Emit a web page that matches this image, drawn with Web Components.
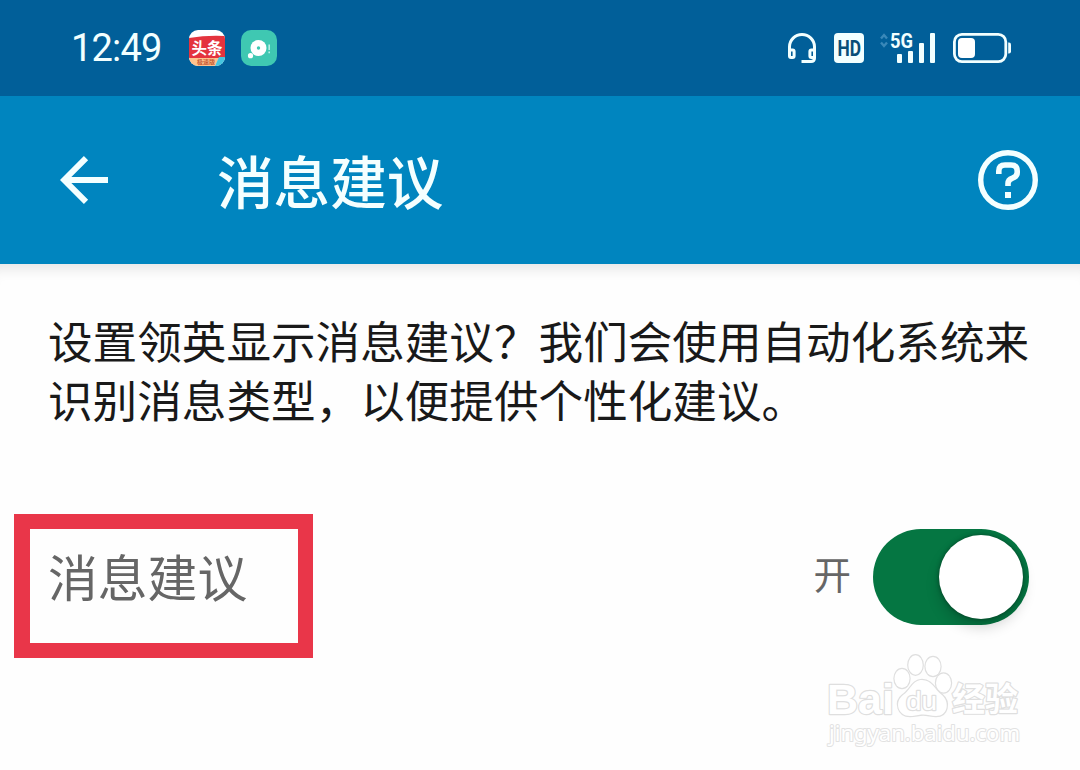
<!DOCTYPE html>
<html lang="zh-CN">
<head>
<meta charset="utf-8">
<title>消息建议</title>
<style>
  body {
    margin: 0;
    width: 1080px;
    height: 770px;
    overflow: hidden;
    background: #fefefe;
    font-family: "Noto Sans CJK SC", sans-serif;
  }
</style>
</head>
<body>
<settings-page>
  <status-bar slot="status" time="12:49"></status-bar>
  <title-bar slot="header">消息建议</title-bar>
  <p slot="intro">设置领英显示消息建议？我们会使用自动化系统来识别消息类型，以便提供个性化建议。</p>
  <setting-row>
    <marked-label>消息建议</marked-label>
    <toggle-switch slot="control">开</toggle-switch>
  </setting-row>
  <site-watermark slot="watermark"></site-watermark>
</settings-page>

<script>
class SettingsPage extends HTMLElement {
  constructor() {
    super();
    this.attachShadow({ mode: "open" });
    this.shadowRoot.innerHTML = `
      <style>
        :host { display: flex; flex-direction: column; position: relative; height: 770px; }
        main { padding: 46px 51px 0 48px; box-shadow: inset 0 16px 13px -11px rgba(0,0,0,.1); }
        ::slotted(p) { margin: 0 0 95px; width: 990px; font-size: 44.6px; line-height: 59.4px; font-weight: 400; color: #191919; }
      </style>
      <slot name="status"></slot>
      <slot name="header"></slot>
      <main>
        <slot name="intro"></slot>
        <slot></slot>
      </main>
      <slot name="watermark"></slot>
    `;
  }
}

class StatusBar extends HTMLElement {
  constructor() {
    super();
    this.attachShadow({ mode: "open" });
  }

  connectedCallback() {
    this.shadowRoot.innerHTML = `
      <style>
        :host { display: flex; align-items: center; box-sizing: border-box; height: 96px; padding: 0 69px 0 71px; background: #015f99; color: #f2ffff; }
        .time { width: 118px; font: 38px/44px Roboto, sans-serif; letter-spacing: -.8px; }
        .apps { display: flex; gap: 16px; flex: 1; }
        .icons { display: flex; align-items: center; }
        svg { display: block; overflow: visible; }
        .hd { margin: 0 15px 0 18px; }
        .battery { margin-left: 17px; }
      </style>
      <span class="time">${this.getAttribute("time")}</span>
      <div class="apps">
        <svg width="36" height="36" viewBox="0 0 36 36">
          <defs><clipPath id="app"><rect width="36" height="36" rx="9"/></clipPath></defs>
          <g clip-path="url(#app)">
            <rect width="36" height="36" fill="#fff"/>
            <path d="M0 8Q18 5 36 6V28H0Z" fill="#e4333e"/>
            <path d="M0 28H30L26 36H0Z" fill="#ffc38d"/>
            <path d="M30 27H36V36H26Z" fill="#45c5df"/>
            <text x="18" y="24" text-anchor="middle" font-family="Noto Sans CJK SC, sans-serif" font-size="15.5" font-weight="700" fill="#fff">头条</text>
            <text x="17" y="34.2" text-anchor="middle" font-family="Noto Sans CJK SC, sans-serif" font-size="6" font-weight="700" fill="#c65b36">极速版</text>
          </g>
        </svg>
        <svg width="36" height="36" viewBox="0 0 36 36">
          <rect width="36" height="36" rx="10" fill="#3fc8b2"/>
          <circle cx="17.5" cy="18" r="8" fill="#fff"/>
          <circle cx="17.5" cy="18" r="1.7" fill="#3fc8b2"/>
          <circle cx="9.5" cy="25.7" r="2.6" fill="#fff"/>
          <path d="M28.2 14.5V20M28.2 21.6V23.2" stroke="#b9eee6" stroke-width="1.6"/>
        </svg>
      </div>
      <div class="icons">
        <svg width="28" height="30" viewBox="0 0 28 30" fill="none" stroke="#f2ffff" stroke-width="3">
          <path d="M1.5 19V13.8a12.5 12.3 0 0 1 25 0V25q0 3.5-3.5 3.5H13.5"/>
          <rect x="1.5" y="17" width="4.6" height="7.6" rx="1.5"/>
          <rect x="21.900" y="17" width="4.6" height="7.6" rx="1.5"/>
        </svg>
        <svg class="hd" width="30" height="30" viewBox="0 0 30 30">
          <rect width="30" height="30" rx="4" fill="#f2ffff"/>
          <text x="3.6" y="22.6" textLength="23.5" lengthAdjust="spacingAndGlyphs" font-family="Roboto, sans-serif" font-size="21.5" font-weight="700" fill="#084e78">HD</text>
        </svg>
        <svg width="57" height="30" viewBox="0 0 57 30">
          <path d="M2 5.5L5 2L8 5.5M2 9.5L5 13L8 9.5" fill="none" stroke="#3988b9" stroke-width="2.4"/>
          <text x="11" y="14.7" textLength="23" lengthAdjust="spacingAndGlyphs" font-family="Roboto, sans-serif" font-size="19.5" font-weight="700" fill="#f2ffff">5G</text>
          <g fill="#f2ffff">
            <rect x="18" y="21" width="5" height="9" rx="1"/>
            <rect x="29" y="18" width="5" height="12" rx="1"/>
            <rect x="40" y="10" width="5" height="20" rx="1"/>
            <rect x="51" y="0" width="5" height="30" rx="1"/>
          </g>
        </svg>
        <svg class="battery" width="58" height="30" viewBox="0 0 58 30">
          <rect x="1.4" y="1.4" width="51.4" height="27.2" rx="7.5" fill="none" stroke="#f2ffff" stroke-width="2.8"/>
          <rect x="5" y="5" width="17" height="20" rx="4" fill="#fff"/>
          <path d="M55.2 9.5h.8q2 0 2 2v7q0 2-2 2h-.8z" fill="#f2ffff"/>
        </svg>
      </div>
    `;
  }
}

class TitleBar extends HTMLElement {
  constructor() {
    super();
    this.attachShadow({ mode: "open" });
    this.shadowRoot.innerHTML = `
      <style>
        :host { display: flex; align-items: center; box-sizing: border-box; height: 168px; padding: 0 42px 0 60px; background: #0085bf; color: #f4ffff; }
        svg { display: block; }
        h1 { flex: 1; margin: 0 0 2px 109px; font-size: 56.6px; line-height: 80px; font-weight: 500; }
      </style>
      <svg width="48" height="48" viewBox="0 0 48 48" fill="none" stroke="#f4ffff" stroke-width="6">
        <path d="M48 24H5M26 2.2L4.2 24L26 45.8"/>
      </svg>
      <h1><slot></slot></h1>
      <svg width="60" height="60" viewBox="0 0 60 60" fill="none" stroke="#f4ffff">
        <circle cx="30" cy="30" r="27.3" stroke-width="5.4"/>
        <path d="M20.8 24V21Q20.8 15 27 15H33Q39.200 15 39.200 21V22.500Q39.200 26.500 34.500 28.200Q30 29.800 30 33.500V36" stroke-width="5.6"/>
        <path d="M27 42h6v6h-6z" fill="#f4ffff" stroke="none"/>
      </svg>
    `;
  }
}

class SettingRow extends HTMLElement {
  constructor() {
    super();
    this.attachShadow({ mode: "open" });
    this.shadowRoot.innerHTML = `
      <style>
        :host { display: flex; align-items: center; justify-content: space-between; height: 106px; }
      </style>
      <slot></slot>
      <slot name="control"></slot>
    `;
  }
}

// Label with a red frame drawn around it
class MarkedLabel extends HTMLElement {
  constructor() {
    super();
    this.attachShadow({ mode: "open" });
    this.shadowRoot.innerHTML = `
      <style>
        :host { display: block; position: relative; margin-bottom: 3px; font-size: 49.8px; line-height: 70px; font-weight: 400; color: #666; }
        .frame { position: absolute; left: -34px; top: -26px; box-sizing: border-box; width: 299px; height: 144px; border: 15px solid #e93649; border-left-width: 16px; }
      </style>
      <slot></slot>
      <div class="frame"></div>
    `;
  }
}

class ToggleSwitch extends HTMLElement {
  constructor() {
    super();
    this.attachShadow({ mode: "open" });
    this.shadowRoot.innerHTML = `
      <style>
        :host { display: flex; align-items: center; gap: 22px; font-size: 37.5px; line-height: 52px; font-weight: 400; color: #666; }
        .state { margin-bottom: 8px; }
        .track { display: flex; align-items: center; justify-content: flex-end; box-sizing: border-box; width: 156px; height: 96px; padding-right: 6px; border-radius: 48px; background: #057642; }
        .thumb { width: 84px; height: 84px; border-radius: 50%; background: #fff; box-shadow: 0 8px 14px rgba(0,0,0,.18), 0 0 4px rgba(0,0,0,.4); }
      </style>
      <span class="state"><slot></slot></span>
      <div class="track"><div class="thumb"></div></div>
    `;
  }
}

class SiteWatermark extends HTMLElement {
  constructor() {
    super();
    this.attachShadow({ mode: "open" });
    this.shadowRoot.innerHTML = `
      <style>
        :host { display: block; position: absolute; left: 820px; top: 645px; }
        svg { display: block; }
        text, ellipse, path { fill: #fff; stroke: #dfdfdf; stroke-width: 2.4px; paint-order: stroke; stroke-linejoin: round; }
        .url { stroke-width: 2px; stroke: #e2e2e2; }
      </style>
      <svg width="220" height="115" viewBox="0 0 220 115">
        <text x="7" y="69" textLength="67" lengthAdjust="spacingAndGlyphs" font-family="Liberation Sans, sans-serif" font-size="43" font-weight="700">Bai</text>
        <ellipse cx="82" cy="33.5" rx="7.5" ry="9.5"/>
        <ellipse cx="95.5" cy="20" rx="7.2" ry="9.7"/>
        <ellipse cx="113" cy="21.500" rx="7.5" ry="9.5"/>
        <ellipse cx="123.5" cy="38" rx="7.5" ry="9.5"/>
        <path d="M102 35C92 35 91 45 83 50C74 57 78 71 90 71C96 71 98 69.5 103 69.5C108 69.5 111 71 116 71C128 71 130 57 122 50C114 44 112 35 102 35Z"/>
        <text x="86" y="64.5" textLength="31" lengthAdjust="spacingAndGlyphs" font-family="Liberation Sans, sans-serif" font-size="26">du</text>
        <text x="132" y="66" font-family="Noto Sans CJK SC, sans-serif" font-size="33" font-weight="700">经验</text>
        <text class="url" x="9" y="96" textLength="191" lengthAdjust="spacingAndGlyphs" font-family="Noto Sans, sans-serif" font-size="22">jingyan.baidu.com</text>
      </svg>
    `;
  }
}

customElements.define("settings-page", SettingsPage);
customElements.define("status-bar", StatusBar);
customElements.define("title-bar", TitleBar);
customElements.define("setting-row", SettingRow);
customElements.define("marked-label", MarkedLabel);
customElements.define("toggle-switch", ToggleSwitch);
customElements.define("site-watermark", SiteWatermark);
</script>
</body>
</html>
